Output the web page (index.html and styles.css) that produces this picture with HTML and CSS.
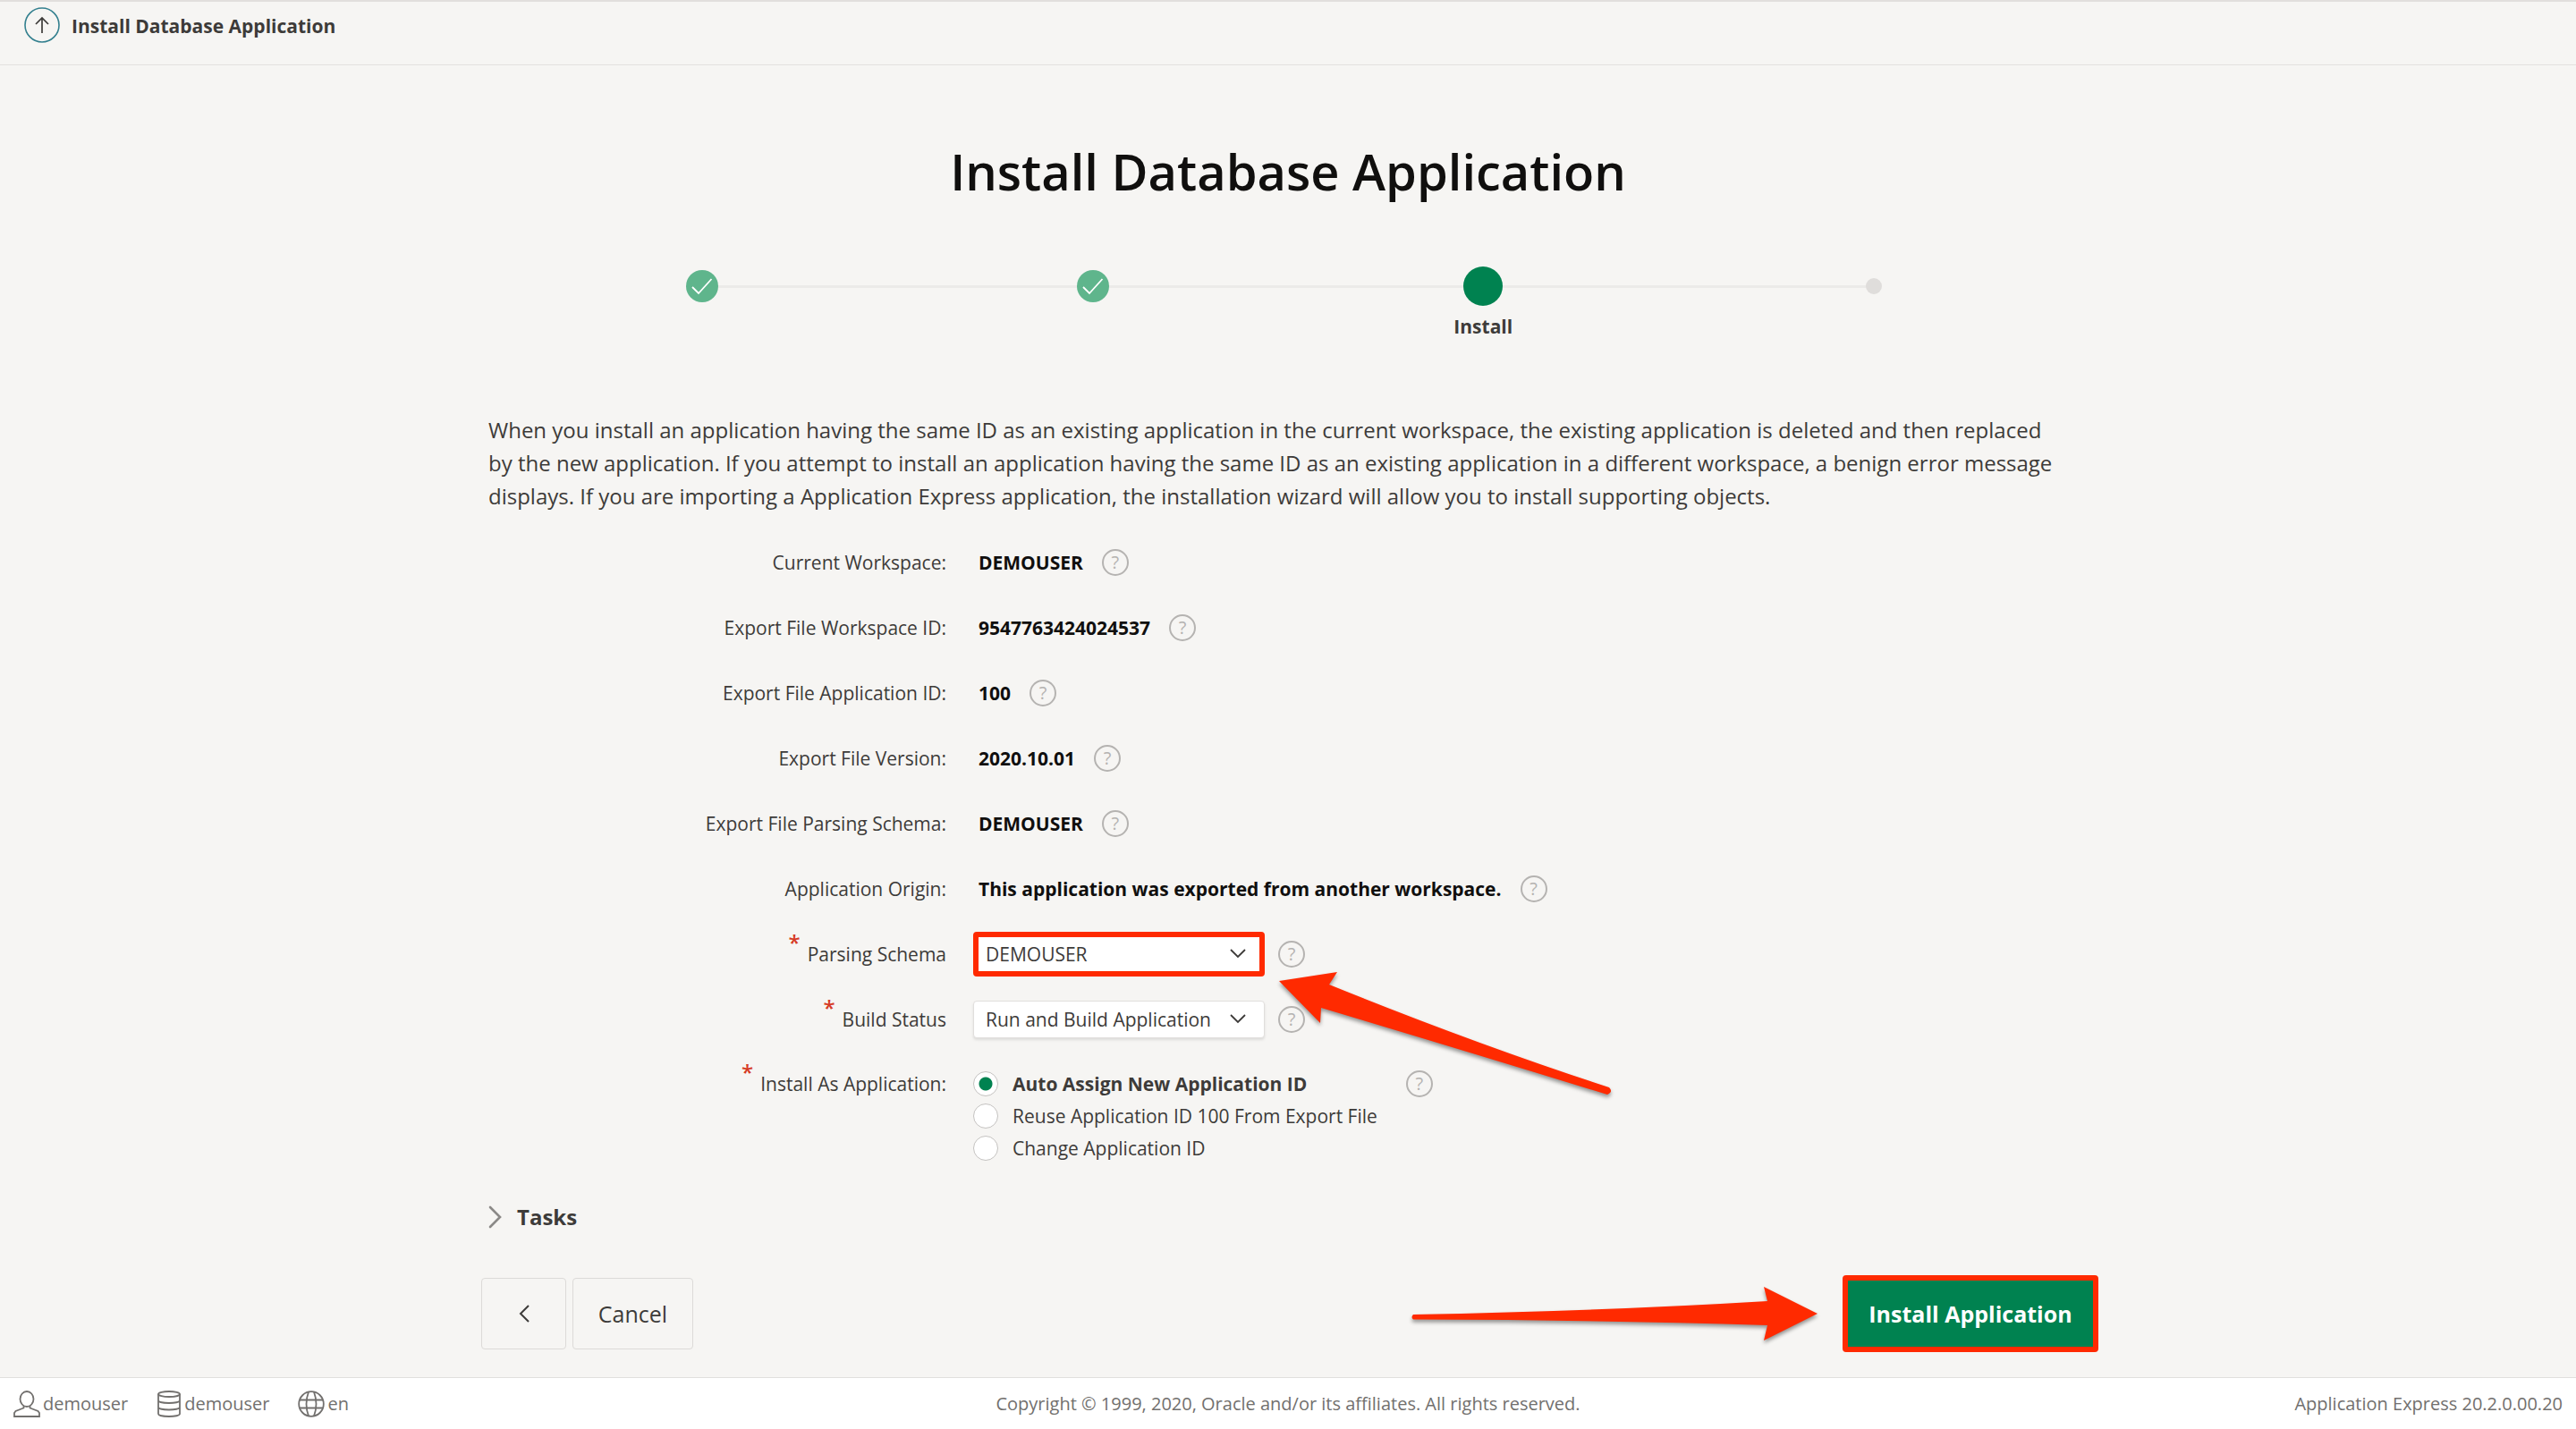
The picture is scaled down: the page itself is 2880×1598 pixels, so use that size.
FILE: index.html
```html
<!DOCTYPE html>
<html lang="en">
<head>
<meta charset="utf-8">
<title>Install Database Application</title>
<link rel="stylesheet" href="styles.css">
</head>
<body>
<header class="topbar">
  <a class="up-link" href="#" aria-label="Up">
    <svg viewBox="0 0 40 40" width="40" height="40"><circle cx="20" cy="20" r="19" fill="none" stroke="#34808f" stroke-width="1.6"/><path d="M20 29V12M13 19l7-7 7 7" fill="none" stroke="#3d3b39" stroke-width="1.7"/></svg>
  </a>
  <span class="crumb">Install Database Application</span>
</header>

<main class="wizard">
  <h1 class="title">Install Database Application</h1>
  <ol class="steps">
    <li class="step"><span class="marker done"><svg viewBox="0 0 36 36" width="36" height="36"><path d="M7 19l7 7 14.500-16" fill="none" stroke="#fff" stroke-width="1.8"/></svg></span></li>
    <li class="step"><span class="marker done"><svg viewBox="0 0 36 36" width="36" height="36"><path d="M7 19l7 7 14.500-16" fill="none" stroke="#fff" stroke-width="1.8"/></svg></span></li>
    <li class="step"><span class="marker current"></span><span class="step-label">Install</span></li>
    <li class="step"><span class="marker future"></span></li>
  </ol>

  <form class="content">
    <p class="intro">When you install an application having the same ID as an existing application in the current workspace, the existing application is deleted and then replaced by the new application. If you attempt to install an application having the same ID as an existing application in a different workspace, a benign error message displays. If you are importing a Application Express application, the installation wizard will allow you to install supporting objects.</p>

    <div class="row"><span class="label">Current Workspace:</span><div class="field"><strong class="value">DEMOUSER</strong><button type="button" class="help">?</button></div></div>
    <div class="row"><span class="label">Export File Workspace ID:</span><div class="field"><strong class="value">9547763424024537</strong><button type="button" class="help">?</button></div></div>
    <div class="row"><span class="label">Export File Application ID:</span><div class="field"><strong class="value">100</strong><button type="button" class="help">?</button></div></div>
    <div class="row"><span class="label">Export File Version:</span><div class="field"><strong class="value">2020.10.01</strong><button type="button" class="help">?</button></div></div>
    <div class="row"><span class="label">Export File Parsing Schema:</span><div class="field"><strong class="value">DEMOUSER</strong><button type="button" class="help">?</button></div></div>
    <div class="row"><span class="label">Application Origin:</span><div class="field"><strong class="value">This application was exported from another workspace.</strong><button type="button" class="help">?</button></div></div>

    <div class="row">
      <label class="label" for="schema"><span class="required">*</span>Parsing Schema</label>
      <div class="field">
        <span class="select-box marked">
          <select id="schema" class="select"><option>DEMOUSER</option></select>
          <svg class="caret" viewBox="0 0 18 11" width="18" height="11"><path d="M1 1l8 8 8-8" fill="none" stroke="#3d3b39" stroke-width="1.8"/></svg>
        </span>
        <button type="button" class="help">?</button>
        <svg class="arrow arrow-select" viewBox="0 0 380 148" width="380" height="148"><path d="M1 14L66 4L57 18Q220 84 370 133Q375 138 368 141Q215 94 48 44L47 61Z" fill="#ff2a00"/></svg>
      </div>
    </div>
    <div class="row">
      <label class="label" for="build"><span class="required">*</span>Build Status</label>
      <div class="field">
        <span class="select-box">
          <select id="build" class="select"><option>Run and Build Application</option></select>
          <svg class="caret" viewBox="0 0 18 11" width="18" height="11"><path d="M1 1l8 8 8-8" fill="none" stroke="#3d3b39" stroke-width="1.8"/></svg>
        </span>
        <button type="button" class="help">?</button>
      </div>
    </div>
    <div class="row row-radios">
      <span class="label" id="install-as"><span class="required">*</span>Install As Application:</span>
      <div class="field field-radios">
        <div class="radios" role="radiogroup" aria-labelledby="install-as">
          <label class="option"><input type="radio" name="appid" checked><span>Auto Assign New Application ID</span></label>
          <label class="option"><input type="radio" name="appid"><span>Reuse Application ID 100 From Export File</span></label>
          <label class="option"><input type="radio" name="appid"><span>Change Application ID</span></label>
        </div>
        <button type="button" class="help">?</button>
      </div>
    </div>

    <button type="button" class="tasks">
      <svg viewBox="0 0 16 26" width="16" height="26"><path d="M2 2l11 11L2 24" fill="none" stroke="#8b8987" stroke-width="2.6" stroke-linecap="round"/></svg>
      Tasks
    </button>

    <div class="actions">
      <button type="button" class="btn btn-back" aria-label="Back"><svg viewBox="0 0 14 22" width="14" height="22"><path d="M12 2L3 11l9 9" fill="none" stroke="#3d3b39" stroke-width="2"/></svg></button>
      <button type="button" class="btn btn-cancel">Cancel</button>
      <span class="primary-wrap">
        <svg class="arrow arrow-install" viewBox="0 0 460 70" width="460" height="70"><path d="M6 35Q220 31 402 20L398 4L458 34L398 64L402 47Q220 41 6 40.500Q3 38 6 35Z" fill="#ff2a00"/></svg>
        <button type="submit" class="btn btn-primary">Install Application</button>
      </span>
    </div>
  </form>
</main>

<footer class="footer">
  <div class="meta">
    <span class="meta-item"><svg viewBox="0 0 30 30" width="30" height="30"><g fill="none" stroke="#72706e" stroke-width="1.800"><ellipse cx="15" cy="9.500" rx="7.500" ry="8.500"/><path d="M11.500 17v2.500L2.500 23 1 25v4h28v-4l-1.500-2-9-3.500V17"/></g></svg>demouser</span>
    <span class="meta-item"><svg viewBox="0 0 28 30" width="28" height="30"><g fill="none" stroke="#72706e" stroke-width="1.800"><ellipse cx="14" cy="4" rx="12" ry="3"/><path d="M2 4v22c0 4 24 4 24 0V4M2 11c0 4 24 4 24 0M2 18.500c0 4 24 4 24 0"/></g></svg>demouser</span>
    <span class="meta-item"><svg viewBox="0 0 30 30" width="30" height="30"><g fill="none" stroke="#72706e" stroke-width="1.800"><circle cx="15" cy="15" r="13.800"/><path d="M2 10.500h26M2 19.500h26M12 1.500q-5 13.500 0 27M18 1.500q5 13.500 0 27"/></g></svg>en</span>
  </div>
  <span>Copyright © 1999, 2020, Oracle and/or its affiliates. All rights reserved.</span>
  <span class="version">Application Express 20.2.0.00.20</span>
</footer>
</body>
</html>
```
FILE: styles.css
```css
* { box-sizing: border-box; }

body {
  margin: 0;
  min-height: 100vh;
  display: flex;
  flex-direction: column;
  background: #f6f5f3;
  color: #3d3b39;
  font-family: "Open Sans", "Noto Sans", sans-serif;
  font-size: 21px;
  line-height: 30px;
}

button, select, input { font: inherit; color: inherit; margin: 0; }
svg { display: block; flex: none; }

.topbar {
  display: flex;
  align-items: flex-start;
  gap: 13px;
  height: 73px;
  padding: 6px 27px;
  border-top: 2px solid #e1dfdd;
  border-bottom: 1px solid #e3e1df;
}
.crumb { font-weight: 700; line-height: 42px; }

.wizard {
  flex: 1;
  padding: 82px 24px 28px;
}
.title {
  margin: 0 0 71px;
  color: #100f0e;
  font-size: 56px;
  font-weight: 600;
  line-height: 72px;
  text-align: center;
}

.steps {
  display: grid;
  grid-template-columns: repeat(4, 1fr);
  max-width: 1746px;
  height: 82px;
  margin: 0 auto 82px;
  padding: 0;
  list-style: none;
}
.step {
  position: relative;
  display: grid;
  grid-template-rows: 44px 30px;
  gap: 8px;
  place-items: center;
}
.step:not(:last-child)::before {
  content: "";
  position: absolute;
  top: 21px;
  left: 50%;
  width: 100%;
  height: 3px;
  background: #ebeae8;
}
.marker { position: relative; z-index: 1; border-radius: 50%; }
.done { width: 36px; height: 36px; background: #5fb58c; }
.current { width: 44px; height: 44px; background: #008250; }
.future { width: 18px; height: 18px; background: #dfdddb; }
.step-label { font-weight: 700; }

.content { max-width: 1812px; margin: 0 auto; padding-left: 4px; }
.intro {
  margin: 0 0 19px;
  padding: 0 40px 0 8px;
  font-size: 24px;
  line-height: 37px;
}

.row {
  display: grid;
  grid-template-columns: 520px 1fr;
  column-gap: 30px;
  align-items: center;
  min-height: 73px;
}
.label {
  display: flex;
  justify-content: flex-end;
  gap: 8px;
}
.required {
  color: #d63b25;
  font-size: 24px;
  font-weight: 600;
  line-height: 4px;
}
.field {
  position: relative;
  display: flex;
  align-items: center;
  gap: 15px;
}
.value { margin-right: 6px; padding-left: 6px; color: #100f0e; }
.help {
  flex: none;
  width: 30px;
  height: 30px;
  padding: 0;
  border: 2px solid #b5b3b1;
  border-radius: 50%;
  background: none;
  color: #b5b3b1;
  font-size: 20px;
  line-height: 26px;
}

.select-box {
  position: relative;
  display: flex;
  width: 326px;
  height: 42px;
  border: 1px solid #e1dfdd;
  border-radius: 4px;
  background: #fff;
  box-shadow: 0 2px 3px rgba(0, 0, 0, 0.1);
}
.marked {
  height: 50px;
  border: 6px solid #ff2a00;
  box-shadow: none;
}
.select {
  appearance: none;
  width: 100%;
  padding: 0 44px 0 13px;
  border: 0;
  background: none;
}
.marked .select { padding-left: 8px; }
.caret {
  position: absolute;
  top: 50%;
  right: 20px;
  margin-top: -6px;
  pointer-events: none;
}
.marked .caret { right: 15px; }

.row-radios { align-items: start; padding-top: 18px; }
.row-radios .label { line-height: 36px; }
.row-radios .required { line-height: 10px; }
.field-radios { align-items: flex-start; gap: 32px; }
.radios { display: flex; flex-direction: column; }
.option {
  display: flex;
  align-items: center;
  gap: 16px;
  line-height: 36px;
}
.option input {
  appearance: none;
  width: 28px;
  height: 28px;
  border: 1px solid #c4c2c0;
  border-radius: 50%;
  background: #fff;
}
.option input:checked { background: radial-gradient(circle, #008250 7px, #fff 8px); }
.option input:checked + span { font-weight: 700; }
.field-radios .help { margin-top: 3px; }

.tasks {
  display: flex;
  align-items: center;
  gap: 16px;
  margin: 41px 0 47px;
  padding: 0 8px;
  border: 0;
  background: none;
  font-size: 24px;
  font-weight: 700;
  line-height: 36px;
}

.actions { display: flex; align-items: center; gap: 7px; }
.btn {
  display: flex;
  align-items: center;
  justify-content: center;
  height: 80px;
  padding: 0;
  border: 1px solid #dcdad8;
  border-radius: 4px;
  background: none;
  font-size: 25px;
}
.btn-back { width: 95px; }
.btn-cancel { width: 135px; }
.primary-wrap { position: relative; margin-left: auto; }
.btn-primary {
  width: 286px;
  height: 86px;
  border: 6px solid #ff2a00;
  background: #008250;
  color: #fff;
  font-weight: 700;
}

.arrow {
  position: absolute;
  z-index: 2;
  filter: drop-shadow(0 3px 2px rgba(0, 0, 0, 0.4));
  pointer-events: none;
}
.arrow-select { top: 41px; left: 341px; }
.arrow-install { top: 9px; right: 312px; }

.footer {
  display: grid;
  grid-template-columns: 1fr auto 1fr;
  align-items: center;
  height: 59px;
  padding: 0 15px;
  border-top: 1px solid #e1dfdd;
  background: #fff;
  color: #72706e;
  font-size: 20px;
}
.meta { display: flex; gap: 32px; }
.meta-item { display: flex; align-items: center; gap: 3px; }
.version { text-align: right; }
```
